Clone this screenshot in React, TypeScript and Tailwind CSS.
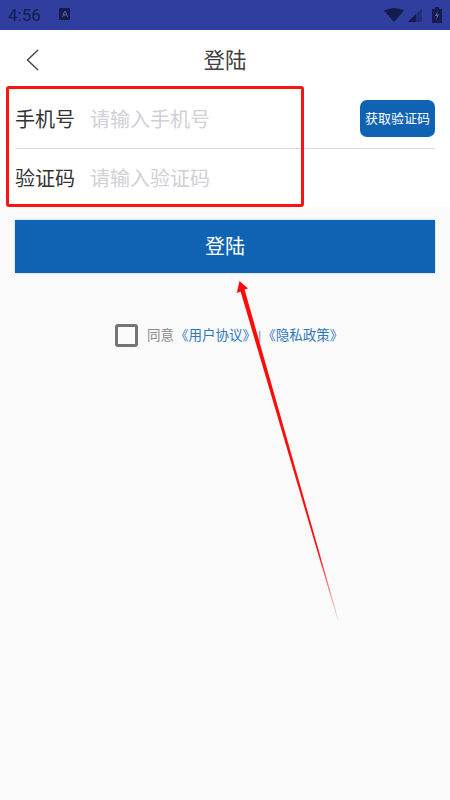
const cjk = "font-['Roboto','Noto_Sans_CJK_SC',sans-serif]"

function StatusBar() {
  return (
    <div className="flex h-[30px] items-center justify-between bg-[#303f9f] pl-[8px] pr-[8px] text-[#141c4d]">
      <div className="flex items-center gap-[18px]">
        <span className="w-[33px] text-[17px] leading-none font-normal whitespace-nowrap">4:56</span>
        <svg width="12" height="13" viewBox="0 0 12 13" className="mt-[-2px]">
          <rect x="0" y="0" width="11" height="12" rx="1" fill="#141c4d" />
          <path d="M3.5 9 L5.5 3.5 L6.5 3.5 L8.5 9 M4.5 7 L7.5 7" stroke="#5a68b8" strokeWidth="1" fill="none" />
        </svg>
      </div>
      <div className="flex items-center gap-[4px]">
        <svg width="20" height="14" viewBox="0 0 20 14">
          <path d="M0 2.5 Q10 -2.5 20 2.5 L10 14 Z" fill="#141c4d" />
        </svg>
        <svg width="14" height="14" viewBox="0 0 14 14">
          <path d="M0 14 L14 14 L14 0 Z" fill="#232f78" />
          <path d="M0 14 L8 14 L8 6 Z" fill="#141c4d" />
        </svg>
        <svg width="10" height="16" viewBox="0 0 10 16" className="ml-[6px]">
          <path d="M3 0 H7 V2 H10 V16 H0 V2 H3 Z" fill="#141c4d" />
          <path d="M6 4 L3 9 H5 L4 13 L7 7.5 H5 Z" fill="#5a68b8" />
        </svg>
      </div>
    </div>
  )
}

export default function App() {
  return (
    <div className={`relative flex h-[800px] w-[450px] flex-col overflow-hidden bg-[#fafafa] ${cjk}`}>
      <StatusBar />

      <header className="relative flex h-[59px] items-center justify-center bg-white pt-[2px]">
        <svg width="14" height="24" viewBox="0 0 14 24" className="absolute top-[18px] left-[25px]">
          <path d="M13 2 L2.5 12 L13 22" stroke="#4a4a4a" strokeWidth="1.5" fill="none" />
        </svg>
        <h1 className="text-[21.5px] leading-none font-normal text-[#404040]">登陆</h1>
      </header>

      <div className="bg-white">
        <div className="mx-[15px] flex h-[60px] items-center border-b border-[#d9d9de] pt-[2px]">
          <span className="w-[75px] text-[20px] text-[#333333]">手机号</span>
          <span className="flex-1 text-[20px] text-[#d0d0d6]">请输入手机号</span>
          <button type="button" className="mb-[2px] flex h-[37px] w-[75px] items-center justify-center rounded-[7px] bg-[#0f63b2] text-[13px] whitespace-nowrap text-white">
            获取验证码
          </button>
        </div>
        <div className="mx-[15px] flex h-[58px] items-center pt-[2px]">
          <span className="w-[75px] text-[20px] text-[#333333]">验证码</span>
          <span className="flex-1 text-[20px] text-[#d0d0d6]">请输入验证码</span>
        </div>
      </div>

      <button type="button" className="mx-[15px] mt-[13px] flex h-[53px] items-center justify-center bg-[#0f63b2] text-[20px] text-white shadow-[0_0_2px_rgba(15,99,178,0.35)]">
        登陆
      </button>

      <div className="mt-[51px] flex items-center pl-[115px]">
        <span className="h-[23px] w-[23px] rounded-[3px] border-[3px] border-[#757575]" />
        <span className="ml-[9px] text-[13.5px] whitespace-nowrap text-[#8a8a8a]">同意</span>
        <span className="ml-[1px] text-[13.5px] whitespace-nowrap text-[#2f76ba]">《用户协议》</span>
        <span className="ml-[2px] text-[13.5px] text-[#8a8a8a]">|</span>
        <span className="ml-[1px] text-[13.5px] whitespace-nowrap text-[#2f76ba]">《隐私政策》</span>
      </div>

      {/* red annotations drawn over the page */}
      <div className="absolute top-[86px] left-[6px] h-[121px] w-[298px] rounded-[3px] border-[3px] border-[#fa1414]" />
      <svg width="450" height="800" viewBox="0 0 450 800" className="pointer-events-none absolute top-0 left-0">
        <defs>
          <linearGradient id="tail" x1="240" y1="281" x2="338" y2="620" gradientUnits="userSpaceOnUse">
            <stop offset="0" stopColor="#ff0808" />
            <stop offset="0.8" stopColor="#ff1010" />
            <stop offset="1" stopColor="#ff2020" stopOpacity="0.15" />
          </linearGradient>
        </defs>
        <path d="M239.5 281 L248 288.5 L244.6 289.6 L338.5 620 L337.6 620 L240.6 291.6 L236.8 293 Z" fill="url(#tail)" />
      </svg>
    </div>
  )
}
